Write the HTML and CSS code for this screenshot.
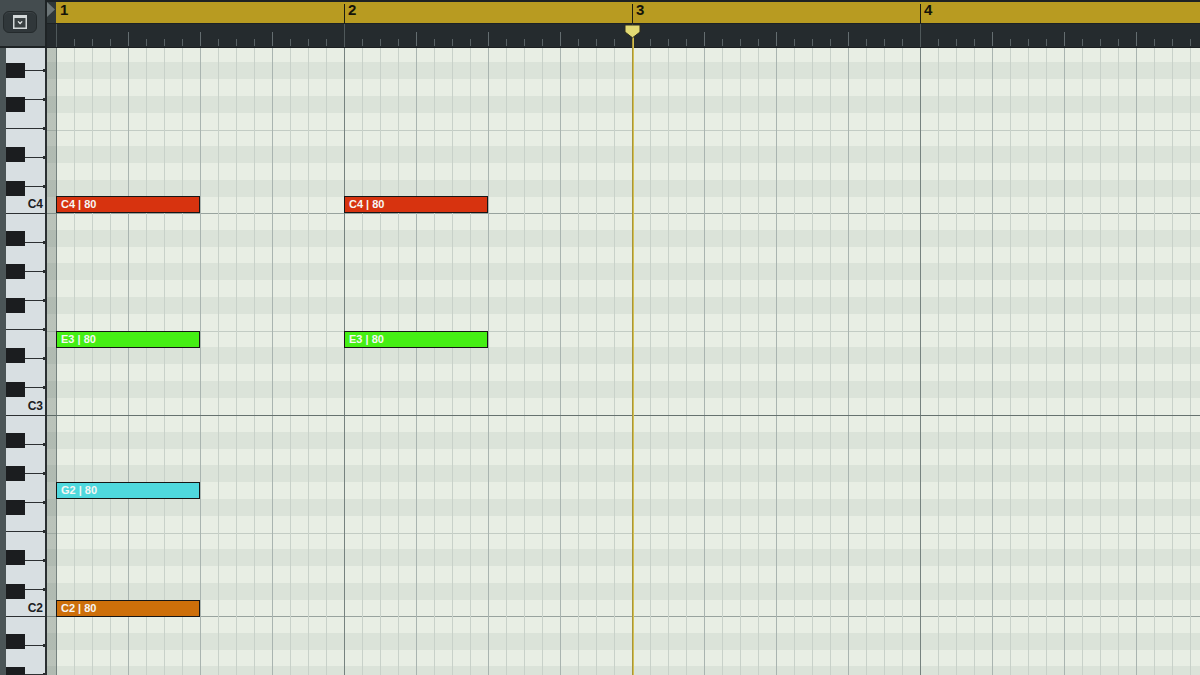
FILE: index.html
```html
<!DOCTYPE html>
<html>
<head>
<meta charset="utf-8">
<title>Piano Roll</title>
<link rel="stylesheet" href="styles.css">
</head>
<body>
<div class="app">
  <div class="corner">
    <div class="btn">
      <svg class="btn-icon" width="14" height="14" viewBox="0 0 14 14">
        <rect x="0" y="0" width="14" height="14" fill="#d3d8d9"/>
        <rect x="1.5" y="3" width="11" height="9.5" fill="#3a4143"/>
        <polyline points="5,6.4 7.1,8.5 9.2,6.4" fill="none" stroke="#e9eded" stroke-width="1.3"/>
      </svg>
    </div>
  </div>

  <div class="ruler">
    <div class="bars">
      <div class="ruler-cap">
        <svg width="9" height="16" viewBox="0 0 9 16"><polygon points="0,0 8,7.5 0,15" fill="#6b7476"/></svg>
      </div>
      <div class="bar first">1</div>
      <div class="bar">2</div>
      <div class="bar">3</div>
      <div class="bar">4</div>
    </div>
    <div class="ticks"></div>
  </div>

  <div class="keys">
    <div class="key-oct"><span class="key-label">C4</span></div>
    <div class="key-oct"><span class="key-label">C3</span></div>
    <div class="key-oct"><span class="key-label">C2</span></div>
    <div class="key-oct"></div>
  </div>

  <div class="grid">
    <div class="grid-oct"></div>
    <div class="grid-oct"></div>
    <div class="grid-oct strong-top"></div>
    <div class="grid-oct"></div>

    <div class="note red" style="left:9px;top:148.4px">C4 | 80</div>
    <div class="note red" style="left:297px;top:148.4px">C4 | 80</div>
    <div class="note green" style="left:9px;top:282.8px">E3 | 80</div>
    <div class="note green" style="left:297px;top:282.8px">E3 | 80</div>
    <div class="note cyan" style="left:9px;top:434px">G2 | 80</div>
    <div class="note orange" style="left:9px;top:551.6px">C2 | 80</div>
  </div>

  <div class="playhead">
    <svg class="playhead-handle" width="17" height="15" viewBox="0 0 17 15">
      <path d="M1 1 H16 V8 L8.5 13.8 L1 8 Z" fill="#e2da74" stroke="#2e2d1c" stroke-width="1"/>
    </svg>
    <div class="playhead-line"></div>
  </div>
</div>
</body>
</html>
```

FILE: styles.css
```css
html, body {
  margin: 0;
  padding: 0;
}

body {
  width: 1200px;
  height: 675px;
  overflow: hidden;
  background: #252b2e;
  font-family: "Liberation Sans", Arial, sans-serif;
}

.app {
  position: relative;
  display: grid;
  grid-template-columns: 47px 1153px;
  grid-template-rows: 48px 627px;
  width: 1200px;
  height: 675px;
  overflow: hidden;
}

/* ---------- top-left corner ---------- */
.corner {
  box-sizing: border-box;
  background: #444c4f;
  border-right: 2px solid #1e2325;
  border-bottom: 2px solid #1e2325;
  padding: 11px 0 0 3px;
}

.btn {
  box-sizing: border-box;
  width: 34px;
  height: 22px;
  border-radius: 6px;
  background: #30373a;
  border: 1px solid #242a2c;
  box-shadow: inset 0 1px 0 rgba(255, 255, 255, 0.06);
  display: flex;
  align-items: center;
  justify-content: center;
}

.btn-icon {
  display: block;
}

/* ---------- ruler ---------- */
.ruler {
  display: flex;
  flex-direction: column;
  background: #1d2224;
  overflow: hidden;
}

.bars {
  display: flex;
  height: 21px;
  margin-top: 2px;
  flex: none;
}

.ruler-cap {
  width: 9px;
  flex: none;
  background: #2f3739;
}

.ruler-cap svg {
  display: block;
}

.bar {
  box-sizing: border-box;
  width: 288px;
  flex: none;
  padding-left: 4px;
  font-weight: bold;
  font-size: 15px;
  line-height: 16px;
  color: #141309;
  background: linear-gradient(#1c1c12, #1c1c12) 0 2px / 1px 100% no-repeat, #b89b21;
}

.bar.first {
  background: #b89b21;
}

.ticks {
  box-sizing: border-box;
  height: 24px;
  margin-top: 1px;
  flex: none;
  border-bottom: 1px solid #1b1f21;
  background:
    linear-gradient(to right, #4f585a 0 1px, transparent 1px) 9px 0 / 288px 100% repeat-x,
    linear-gradient(to right, #646d70 0 1px, transparent 1px) 9px 8px / 72px 14px repeat-x,
    linear-gradient(to right, #596265 0 1px, transparent 1px) 9px 15px / 18px 7px repeat-x,
    #252b2e;
}

/* ---------- piano keys ---------- */
.keys {
  box-sizing: border-box;
  display: flex;
  flex-direction: column;
  padding-left: 6px;
  background: #4b5557;
  overflow: hidden;
}

.key-oct {
  flex: none;
  box-sizing: border-box;
  width: 41px;
  height: 201.6px;
  border-right: 2px solid #2a2f31;
  display: flex;
  align-items: flex-end;
  justify-content: flex-end;
  background:
    /* small end marks at the right edge */
    linear-gradient(to bottom,
      transparent 0 27.8px, #2a2e30 27.8px 30.8px,
      transparent 30.8px 56.6px, #2a2e30 56.6px 59.6px,
      transparent 59.6px 85.8px, #2a2e30 85.8px 88.8px,
      transparent 88.8px 115px, #2a2e30 115px 118px,
      transparent 118px 144px, #2a2e30 144px 147px,
      transparent 147px 173px, #2a2e30 173px 176px,
      transparent 176px) 37px 0 / 2px 100% no-repeat,
    /* white key separators next to the black keys */
    linear-gradient(to bottom,
      transparent 0 28.8px, #2c3032 28.8px 29.8px,
      transparent 29.8px 57.6px, #2c3032 57.6px 58.6px,
      transparent 58.6px 86.8px, #2c3032 86.8px 87.8px,
      transparent 87.8px 145px, #2c3032 145px 146px,
      transparent 146px 174px, #2c3032 174px 175px,
      transparent 175px) 19px 0 / 20px 100% no-repeat,
    /* full separators B/C and E/F */
    linear-gradient(to bottom,
      #2c3032 0 1px, transparent 1px 116px,
      #2c3032 116px 117px, transparent 117px) 0 0 / 100% 100% no-repeat,
    /* black keys */
    linear-gradient(to bottom,
      transparent 0 17.8px, #1b1d1f 17.8px 32.6px,
      transparent 32.6px 51.4px, #1b1d1f 51.4px 66.2px,
      transparent 66.2px 85px, #1b1d1f 85px 99.8px,
      transparent 99.8px 135.4px, #1b1d1f 135.4px 150.2px,
      transparent 150.2px 169px, #1b1d1f 169px 183.8px,
      transparent 183.8px) 0 0 / 19px 100% no-repeat,
    #d8dfe2;
}

.key-oct:first-child {
  margin-top: -36.4px;
}

.key-label {
  display: block;
  height: 16.8px;
  line-height: 16.8px;
  padding-right: 2px;
  font-weight: bold;
  font-size: 12px;
  color: #1c2022;
}

/* ---------- grid ---------- */
.grid {
  position: relative;
  display: flex;
  flex-direction: column;
  overflow: hidden;
}

.grid-oct {
  flex: none;
  height: 201.6px;
  background:
    linear-gradient(rgba(66, 82, 76, 0.28), rgba(66, 82, 76, 0.28)) 0 0 / 9px 100% no-repeat,
    linear-gradient(to right, #76827f 0 1px, transparent 1px) 9px 0 / 288px 100% repeat-x,
    linear-gradient(to right, #a9b4b0 0 1px, transparent 1px) 9px 0 / 72px 100% repeat-x,
    linear-gradient(to right, #c8d1c9 0 1px, transparent 1px) 9px 0 / 18px 100% repeat-x,
    linear-gradient(to bottom,
      #98a39e 0 1px,
      #e8eee4 1px 16.8px,
      #dbe3d9 16.8px 33.6px,
      #e8eee4 33.6px 50.4px,
      #dbe3d9 50.4px 67.2px,
      #e8eee4 67.2px 84px,
      #dbe3d9 84px 100.8px,
      #e8eee4 100.8px 117.6px,
      #c3ccc4 117.6px 118.6px,
      #e8eee4 118.6px 134.4px,
      #dbe3d9 134.4px 151.2px,
      #e8eee4 151.2px 168px,
      #dbe3d9 168px 184.8px,
      #e8eee4 184.8px 201.6px) 0 0 / 100% 100% no-repeat;
}

.grid-oct:first-child {
  margin-top: -36.4px;
}

.grid-oct.strong-top {
  background:
    linear-gradient(rgba(66, 82, 76, 0.28), rgba(66, 82, 76, 0.28)) 0 0 / 9px 100% no-repeat,
    linear-gradient(#66726f, #66726f) 0 0 / 100% 1px no-repeat,
    linear-gradient(to right, #76827f 0 1px, transparent 1px) 9px 0 / 288px 100% repeat-x,
    linear-gradient(to right, #a9b4b0 0 1px, transparent 1px) 9px 0 / 72px 100% repeat-x,
    linear-gradient(to right, #c8d1c9 0 1px, transparent 1px) 9px 0 / 18px 100% repeat-x,
    linear-gradient(to bottom,
      #98a39e 0 1px,
      #e8eee4 1px 16.8px,
      #dbe3d9 16.8px 33.6px,
      #e8eee4 33.6px 50.4px,
      #dbe3d9 50.4px 67.2px,
      #e8eee4 67.2px 84px,
      #dbe3d9 84px 100.8px,
      #e8eee4 100.8px 117.6px,
      #c3ccc4 117.6px 118.6px,
      #e8eee4 118.6px 134.4px,
      #dbe3d9 134.4px 151.2px,
      #e8eee4 151.2px 168px,
      #dbe3d9 168px 184.8px,
      #e8eee4 184.8px 201.6px) 0 0 / 100% 100% no-repeat;
}

/* ---------- notes ---------- */
.note {
  position: absolute;
  box-sizing: border-box;
  width: 144px;
  height: 17px;
  border: 1px solid #161616;
  padding-left: 4px;
  font-weight: bold;
  font-size: 11px;
  line-height: 15px;
  color: #f6f6f4;
  white-space: nowrap;
}

.note.red { background: #d7330f; }
.note.green { background: #45ef14; }
.note.cyan { background: #4fd8dd; }
.note.orange { background: #cd6f0a; }

/* ---------- playhead ---------- */
.playhead {
  position: absolute;
  left: 624px;
  top: 24px;
  bottom: 0;
  width: 17px;
  display: flex;
  flex-direction: column;
  align-items: center;
}

.playhead-handle {
  display: block;
  flex: none;
  position: relative;
  z-index: 2;
}

.playhead-line {
  flex: 1;
  width: 2px;
  margin-top: -2px;
  background: linear-gradient(to right, #a8953a 50%, #d3bf50 50%);
}
```
